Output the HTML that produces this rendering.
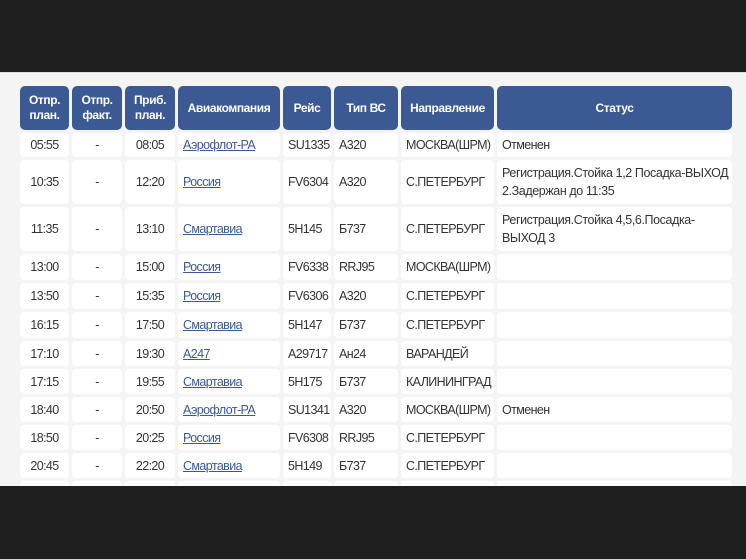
<!DOCTYPE html>
<html><head><meta charset="utf-8"><style>
body{margin:0;width:746px;height:559px;background:#1e1e1e;overflow:hidden;font-family:"Liberation Sans",Arial,sans-serif;}
.wrap{position:absolute;left:0;top:72px;width:746px;height:413px;background:#f4f4f4;overflow:hidden;border-top:1px solid #ddd}
table{position:absolute;left:17px;top:10px;width:718px;border-collapse:separate;border-spacing:3px;table-layout:fixed;font-size:12.5px;color:#333;letter-spacing:-0.6px}
th{background:#3b5a94;color:#fff;font-weight:bold;border-radius:5px;height:44px;padding:0;line-height:15px;font-size:12px;letter-spacing:-0.4px}
td{background:#fff;border-radius:4px;padding:0 0 0 5px;white-space:nowrap;line-height:14px;overflow:hidden}
td.c{text-align:center;padding:0}
td.s{line-height:18px;letter-spacing:-0.4px}
a{color:#3b5a94;text-decoration:underline}
</style></head><body>
<div class="wrap">
<table>
<colgroup><col style="width:49px"><col style="width:50px"><col style="width:50px"><col style="width:102px"><col style="width:48px"><col style="width:64px"><col style="width:93px"><col style="width:235px"></colgroup>
<tr><th>Отпр.<br>план.</th><th>Отпр.<br>факт.</th><th>Приб.<br>план.</th><th>Авиакомпания</th><th>Рейс</th><th>Тип ВС</th><th>Направление</th><th>Статус</th></tr>
<tr style="height:24px"><td class="c">05:55</td><td class="c">-</td><td class="c">08:05</td><td><a>Аэрофлот-РА</a></td><td>SU1335</td><td>A320</td><td>МОСКВА(ШРМ)</td><td>Отменен</td></tr>
<tr style="height:44px"><td class="c">10:35</td><td class="c">-</td><td class="c">12:20</td><td><a>Россия</a></td><td>FV6304</td><td>A320</td><td>С.ПЕТЕРБУРГ</td><td class="s">Регистрация.Стойка 1,2 Посадка-ВЫХОД<br>2.Задержан до 11:35</td></tr>
<tr style="height:44px"><td class="c">11:35</td><td class="c">-</td><td class="c">13:10</td><td><a>Смартавиа</a></td><td>5H145</td><td>Б737</td><td>С.ПЕТЕРБУРГ</td><td class="s">Регистрация.Стойка 4,5,6.Посадка-<br>ВЫХОД 3</td></tr>
<tr style="height:26px"><td class="c">13:00</td><td class="c">-</td><td class="c">15:00</td><td><a>Россия</a></td><td>FV6338</td><td>RRJ95</td><td>МОСКВА(ШРМ)</td><td></td></tr>
<tr style="height:26px"><td class="c">13:50</td><td class="c">-</td><td class="c">15:35</td><td><a>Россия</a></td><td>FV6306</td><td>A320</td><td>С.ПЕТЕРБУРГ</td><td></td></tr>
<tr style="height:26px"><td class="c">16:15</td><td class="c">-</td><td class="c">17:50</td><td><a>Смартавиа</a></td><td>5H147</td><td>Б737</td><td>С.ПЕТЕРБУРГ</td><td></td></tr>
<tr style="height:25px"><td class="c">17:10</td><td class="c">-</td><td class="c">19:30</td><td><a>А247</a></td><td>A29717</td><td>Ан24</td><td>ВАРАНДЕЙ</td><td></td></tr>
<tr style="height:25px"><td class="c">17:15</td><td class="c">-</td><td class="c">19:55</td><td><a>Смартавиа</a></td><td>5H175</td><td>Б737</td><td>КАЛИНИНГРАД</td><td></td></tr>
<tr style="height:25px"><td class="c">18:40</td><td class="c">-</td><td class="c">20:50</td><td><a>Аэрофлот-РА</a></td><td>SU1341</td><td>A320</td><td>МОСКВА(ШРМ)</td><td>Отменен</td></tr>
<tr style="height:25px"><td class="c">18:50</td><td class="c">-</td><td class="c">20:25</td><td><a>Россия</a></td><td>FV6308</td><td>RRJ95</td><td>С.ПЕТЕРБУРГ</td><td></td></tr>
<tr style="height:25px"><td class="c">20:45</td><td class="c">-</td><td class="c">22:20</td><td><a>Смартавиа</a></td><td>5H149</td><td>Б737</td><td>С.ПЕТЕРБУРГ</td><td></td></tr>
<tr style="height:26px"><td></td><td></td><td></td><td></td><td></td><td></td><td></td><td></td></tr>
</table>
</div>
</body></html>
